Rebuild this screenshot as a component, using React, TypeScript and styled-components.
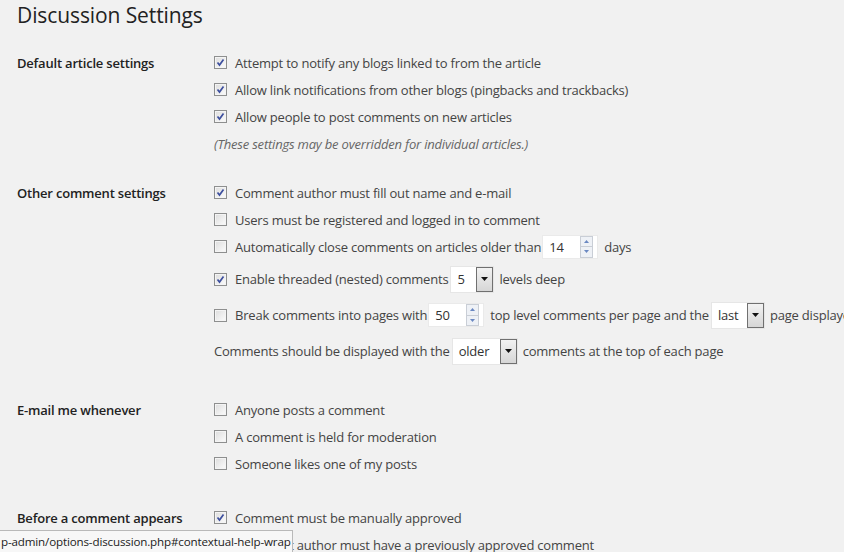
import React from "react";
import styled, { createGlobalStyle } from "styled-components";

const GlobalStyle = createGlobalStyle`
  html, body {
    margin: 0;
    background: #f1f1f1;
    overflow: hidden;
  }
  body {
    font-family: "Open Sans", "Liberation Sans", sans-serif;
    font-size: 13px;
    letter-spacing: -0.2px;
    color: #444;
  }
`;

const Wrap = styled.div`
  padding: 2px 0 0 17px;
  width: 1100px;
`;

const Title = styled.h2`
  margin: 0 0 20px;
  font-size: 21px;
  font-weight: 400;
  letter-spacing: -0.1px;
  line-height: 27px;
  color: #222;
`;

const Section = styled.div<{ $gap?: number }>`
  display: grid;
  grid-template-columns: 197px 1fr;
  margin-bottom: ${({ $gap }) => $gap ?? 27}px;
`;

const Label = styled.div`
  padding-top: 1px;
  font-weight: 600;
  color: #222;
  line-height: 27px;
`;

const Lines = styled.div`
  display: flex;
  flex-direction: column;
`;

const Line = styled.div<{ $h?: number }>`
  display: flex;
  align-items: center;
  height: ${({ $h }) => $h ?? 27}px;
  white-space: nowrap;
`;

const Note = styled(Line)`
  font-style: italic;
  color: #666;
`;

const Box = styled.span`
  position: relative;
  width: 11px;
  height: 11px;
  margin: 0 8px 0 0;
  border: 1px solid #8e8f8f;
  background: linear-gradient(135deg, #dcdcdc 0%, #f6f6f6 80%);
  box-shadow: inset 0 0 0 1px #f4f4f4;
  flex: none;

  svg {
    position: absolute;
    left: 1px;
    top: 1px;
  }
`;

const Check = ({ on }: { on?: boolean }) => (
  <Box>
    {on && (
      <svg width="9" height="9" viewBox="0 0 9 9">
        <path d="M1.5 4.5 L3.5 7 L7.5 1.5" fill="none" stroke="#3d4f9e" strokeWidth="1.7" />
      </svg>
    )}
  </Box>
);

const Spin = styled.span<{ $w: number }>`
  display: inline-flex;
  align-items: center;
  justify-content: space-between;
  box-sizing: border-box;
  width: ${({ $w }) => $w}px;
  height: 24px;
  margin: 0 6px 0 1px;
  padding: 0 4px 0 6px;
  background: #fff;
  border: 1px solid #eaeaea;
  color: #333;
`;

const Arrows = styled.span`
  display: flex;
  flex-direction: column;
  width: 11px;
  height: 20px;
  border: 1px solid #c9ced6;
  background: #eef1f6;

  span {
    flex: 1;
    display: flex;
    align-items: center;
    justify-content: center;
  }
  span + span {
    border-top: 1px solid #c9ced6;
  }
`;

const Spinner = ({ value, w }: { value: string; w: number }) => (
  <Spin $w={w}>
    {value}
    <Arrows>
      <span>
        <svg width="5" height="3" viewBox="0 0 5 3"><path d="M0 3 L2.5 0 L5 3Z" fill="#6a88c2" /></svg>
      </span>
      <span>
        <svg width="5" height="3" viewBox="0 0 5 3"><path d="M0 0 L2.5 3 L5 0Z" fill="#6a88c2" /></svg>
      </span>
    </Arrows>
  </Spin>
);

const Drop = styled.span<{ $w: number }>`
  display: inline-flex;
  align-items: stretch;
  box-sizing: border-box;
  width: ${({ $w }) => $w}px;
  height: 27px;
  margin: 0 5px 0 2px;
  background: #fff;
  border: 1px solid #e6e6e6;
  color: #333;
`;

const DropText = styled.span`
  flex: 1;
  display: flex;
  align-items: center;
  padding-left: 6px;
`;

const DropButton = styled.span`
  width: 15px;
  display: flex;
  align-items: center;
  justify-content: center;
  border: 1px solid #707070;
  background: linear-gradient(#f2f2f2, #d6d6d6);
`;

const Select = ({ value, w }: { value: string; w: number }) => (
  <Drop $w={w}>
    <DropText>{value}</DropText>
    <DropButton>
      <svg width="7" height="4" viewBox="0 0 7 4"><path d="M0 0 L7 0 L3.5 4Z" fill="#111" /></svg>
    </DropButton>
  </Drop>
);

// browser status bubble showing the hovered link
const StatusTip = styled.div`
  position: fixed;
  left: 0;
  bottom: 0;
  width: 293px;
  height: 22px;
  padding-left: 1px;
  box-sizing: border-box;
  display: flex;
  align-items: center;
  background: #f7f7f7;
  border: 1px solid #b9b9b9;
  border-left: none;
  border-bottom: none;
  font-size: 11.6px;
  letter-spacing: -0.15px;
  color: #222;
  white-space: nowrap;
  overflow: hidden;
`;

export default function App() {
  return (
    <>
      <GlobalStyle />
      <Wrap>
        <Title>Discussion Settings</Title>

        <Section $gap={22}>
          <Label>Default article settings</Label>
          <Lines>
            <Line><Check on />Attempt to notify any blogs linked to from the article</Line>
            <Line><Check on />Allow link notifications from other blogs (pingbacks and trackbacks)</Line>
            <Line><Check on />Allow people to post comments on new articles</Line>
            <Note>(These settings may be overridden for individual articles.)</Note>
          </Lines>
        </Section>

        <Section $gap={26}>
          <Label>Other comment settings</Label>
          <Lines>
            <Line><Check on />Comment author must fill out name and e-mail</Line>
            <Line><Check />Users must be registered and logged in to comment</Line>
            <Line><Check />Automatically close comments on articles older than<Spinner value="14" w={56} />days</Line>
            <Line $h={38}><Check on />Enable threaded (nested) comments<Select value="5" w={44} />levels deep</Line>
            <Line $h={34}>
              <Check />Break comments into pages with<Spinner value="50" w={56} />top level comments per page and the
              <Select value="last" w={54} />page displayed by default
            </Line>
            <Line $h={38}>Comments should be displayed with the<Select value="older" w={66} />comments at the top of each page</Line>
          </Lines>
        </Section>

        <Section>
          <Label>E-mail me whenever</Label>
          <Lines>
            <Line><Check />Anyone posts a comment</Line>
            <Line><Check />A comment is held for moderation</Line>
            <Line><Check />Someone likes one of my posts</Line>
          </Lines>
        </Section>

        <Section>
          <Label>Before a comment appears</Label>
          <Lines>
            <Line><Check on />Comment must be manually approved</Line>
            <Line><Check on />Comment author must have a previously approved comment</Line>
          </Lines>
        </Section>
      </Wrap>
      <StatusTip>p-admin/options-discussion.php#contextual-help-wrap</StatusTip>
    </>
  );
}
